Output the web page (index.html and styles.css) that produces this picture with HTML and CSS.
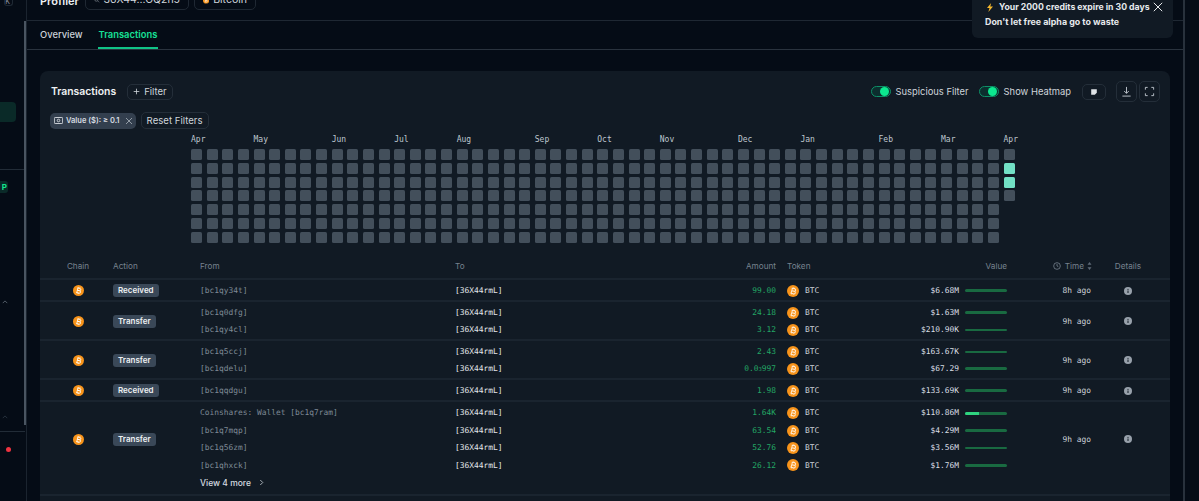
FILE: index.html
```html
<!DOCTYPE html>
<html lang="en">
<head>
<meta charset="utf-8">
<title>Profiler</title>
<link rel="stylesheet" href="styles.css">
</head>
<body>
<svg class="defs" aria-hidden="true">
  <symbol id="btc" viewBox="0 0 24 24">
    <circle cx="12" cy="12" r="12" fill="#f7931a"/>
    <g transform="rotate(14 12 12)" fill="none" stroke="#fff" stroke-width="1.9" stroke-opacity=".85">
      <path d="M8 7h6a2.5 2.5 0 0 1 0 5H9.5h5.2a2.6 2.6 0 0 1 0 5.2H8M9.5 7v10.2M11 5v2M14 5v2M11 17.2v2M14 17.2v2"/>
    </g>
  </symbol>
  <symbol id="info" viewBox="0 0 16 16">
    <circle cx="8" cy="8" r="8" fill="#98a1ab"/>
    <path d="M8 7v5" stroke="#111a24" stroke-width="2"/>
    <circle cx="8" cy="4.6" r="1.2" fill="#111a24"/>
  </symbol>
</svg>

<aside class="side">
  <div class="side-top"><span class="side-key">K</span></div>
  <div class="side-active"></div>
  <div class="side-rule"></div>
  <div class="side-badge">P</div>
  <svg class="side-chev" viewBox="0 0 8 5"><path d="M1 4l3-3 3 3"/></svg>
  <svg class="side-chev side-chev-dim" viewBox="0 0 8 5"><path d="M1 4l3-3 3 3"/></svg>
  <div class="side-rule side-rule-low"></div>
  <div class="side-dot"></div>
  <div class="side-thumb"></div>
</aside>

<main class="main">
  <header class="top">
    <strong class="top-title">Profiler</strong>
    <div class="pill pill-addr">
      <svg class="ico-search" viewBox="0 0 12 12"><circle cx="5" cy="5" r="3.6"/><path d="M8 8l3 3"/></svg>
      <span>36X44...GQ2h5</span>
    </div>
    <div class="pill pill-chain">
      <svg class="ico-btc-md"><use href="#btc"/></svg>
      <span>Bitcoin</span>
    </div>
  </header>

  <nav class="tabs">
    <a class="tab">Overview</a>
    <a class="tab tab-on">Transactions</a>
  </nav>

  <section class="card">
    <div class="toolbar">
      <h2 class="card-title">Transactions</h2>
      <button class="btn-filter"><svg viewBox="0 0 10 10"><path d="M5 1v8M1 5h8"/></svg>Filter</button>
      <div class="tools">
        <span class="toggle"></span><span class="tool-label">Suspicious Filter</span>
        <span class="toggle toggle-2"></span><span class="tool-label">Show Heatmap</span>
        <button class="btn-note"><svg viewBox="0 0 10 10"><path d="M1.500 1.500h7v4.500L6 8.500H1.500z"/></svg></button>
        <button class="btn-icon btn-dl"><svg viewBox="0 0 12 12"><path d="M6 1v7M3.500 5.500L6 8l2.500-2.500M1.500 11h9"/></svg></button>
        <button class="btn-icon"><svg viewBox="0 0 12 12"><path d="M1.500 4V1.500H4M8 1.500h2.500V4M10.500 8v2.500H8M4 10.500H1.500V8"/></svg></button>
      </div>
    </div>

    <div class="filters">
      <span class="chip">
        <svg class="chip-money" viewBox="0 0 12 9"><rect x=".5" y=".5" width="11" height="8" rx="1"/><circle cx="6" cy="4.500" r="1.700"/></svg>
        Value ($): ≥ 0.1
        <svg class="chip-x" viewBox="0 0 8 8"><path d="M1 1l6 6M7 1L1 7"/></svg>
      </span>
      <button class="btn-reset">Reset Filters</button>
    </div>

    <div class="months">
      <span style="grid-column:1/span 4">Apr</span>
      <span style="grid-column:5/span 4">May</span>
      <span style="grid-column:10/span 4">Jun</span>
      <span style="grid-column:14/span 4">Jul</span>
      <span style="grid-column:18/span 4">Aug</span>
      <span style="grid-column:23/span 4">Sep</span>
      <span style="grid-column:27/span 4">Oct</span>
      <span style="grid-column:31/span 4">Nov</span>
      <span style="grid-column:36/span 4">Dec</span>
      <span style="grid-column:40/span 4">Jan</span>
      <span style="grid-column:45/span 4">Feb</span>
      <span style="grid-column:49/span 4">Mar</span>
      <span style="grid-column:53/span 1">Apr</span>
    </div>
    <div class="heat" id="heat"></div>

    <div class="tbl">
      <div class="row head">
        <div class="c-chain">Chain</div>
        <div class="c-action">Action</div>
        <div class="c-from">From</div>
        <div class="c-to">To</div>
        <div class="c-amount">Amount</div>
        <div class="c-token">Token</div>
        <div class="c-value">Value</div>
        <div class="c-time">
          <svg class="ico-clock" viewBox="0 0 12 12"><circle cx="6" cy="6" r="5"/><path d="M6 3v3l2 1"/></svg>Time
          <svg class="ico-sort" viewBox="0 0 6 10"><path d="M3 0l2.500 3.500h-5zM3 10L.5 6.500h5z"/></svg>
        </div>
        <div class="c-details">Details</div>
      </div>

      <div class="row">
        <div class="c-chain"><svg class="ico-chain"><use href="#btc"/></svg></div>
        <div class="c-action"><span class="badge">Received</span></div>
        <div class="c-from"><div class="line">[bc1qy34t]</div></div>
        <div class="c-to"><div class="line">[36X44rmL]</div></div>
        <div class="c-amount"><div class="line">99.00</div></div>
        <div class="c-token"><div class="line"><svg class="ico-token"><use href="#btc"/></svg>BTC</div></div>
        <div class="c-value"><div class="line">$6.68M<span class="bar"></span></div></div>
        <div class="c-time mono">8h ago</div>
        <div class="c-details"><svg class="ico-info"><use href="#info"/></svg></div>
      </div>

      <div class="row">
        <div class="c-chain"><svg class="ico-chain"><use href="#btc"/></svg></div>
        <div class="c-action"><span class="badge">Transfer</span></div>
        <div class="c-from"><div class="line">[bc1q0dfg]</div><div class="line">[bc1qy4cl]</div></div>
        <div class="c-to"><div class="line">[36X44rmL]</div><div class="line">[36X44rmL]</div></div>
        <div class="c-amount"><div class="line">24.18</div><div class="line">3.12</div></div>
        <div class="c-token"><div class="line"><svg class="ico-token"><use href="#btc"/></svg>BTC</div><div class="line"><svg class="ico-token"><use href="#btc"/></svg>BTC</div></div>
        <div class="c-value"><div class="line">$1.63M<span class="bar"></span></div><div class="line">$210.90K<span class="bar bar-thin"></span></div></div>
        <div class="c-time mono">9h ago</div>
        <div class="c-details"><svg class="ico-info"><use href="#info"/></svg></div>
      </div>

      <div class="row">
        <div class="c-chain"><svg class="ico-chain"><use href="#btc"/></svg></div>
        <div class="c-action"><span class="badge">Transfer</span></div>
        <div class="c-from"><div class="line">[bc1q5ccj]</div><div class="line">[bc1qdelu]</div></div>
        <div class="c-to"><div class="line">[36X44rmL]</div><div class="line">[36X44rmL]</div></div>
        <div class="c-amount"><div class="line">2.43</div><div class="line">0.0<sub>3</sub>997</div></div>
        <div class="c-token"><div class="line"><svg class="ico-token"><use href="#btc"/></svg>BTC</div><div class="line"><svg class="ico-token"><use href="#btc"/></svg>BTC</div></div>
        <div class="c-value"><div class="line">$163.67K<span class="bar bar-thin"></span></div><div class="line">$67.29<span class="bar"></span></div></div>
        <div class="c-time mono">9h ago</div>
        <div class="c-details"><svg class="ico-info"><use href="#info"/></svg></div>
      </div>

      <div class="row">
        <div class="c-chain"><svg class="ico-chain"><use href="#btc"/></svg></div>
        <div class="c-action"><span class="badge">Received</span></div>
        <div class="c-from"><div class="line">[bc1qqdgu]</div></div>
        <div class="c-to"><div class="line">[36X44rmL]</div></div>
        <div class="c-amount"><div class="line">1.98</div></div>
        <div class="c-token"><div class="line"><svg class="ico-token"><use href="#btc"/></svg>BTC</div></div>
        <div class="c-value"><div class="line">$133.69K<span class="bar"></span></div></div>
        <div class="c-time mono">9h ago</div>
        <div class="c-details"><svg class="ico-info"><use href="#info"/></svg></div>
      </div>

      <div class="row row-more">
        <div class="c-chain"><svg class="ico-chain"><use href="#btc"/></svg></div>
        <div class="c-action"><span class="badge">Transfer</span></div>
        <div class="c-from"><div class="line">Coinshares: Wallet [bc1q7ram]</div><div class="line">[bc1q7mqp]</div><div class="line">[bc1q56zm]</div><div class="line">[bc1qhxck]</div></div>
        <div class="c-to"><div class="line">[36X44rmL]</div><div class="line">[36X44rmL]</div><div class="line">[36X44rmL]</div><div class="line">[36X44rmL]</div></div>
        <div class="c-amount"><div class="line">1.64K</div><div class="line">63.54</div><div class="line">52.76</div><div class="line">26.12</div></div>
        <div class="c-token"><div class="line"><svg class="ico-token"><use href="#btc"/></svg>BTC</div><div class="line"><svg class="ico-token"><use href="#btc"/></svg>BTC</div><div class="line"><svg class="ico-token"><use href="#btc"/></svg>BTC</div><div class="line"><svg class="ico-token"><use href="#btc"/></svg>BTC</div></div>
        <div class="c-value"><div class="line">$110.86M<span class="bar"><i class="bar-fill" style="width:33%"></i></span></div><div class="line">$4.29M<span class="bar"></span></div><div class="line">$3.56M<span class="bar bar-thin"></span></div><div class="line">$1.76M<span class="bar"></span></div></div>
        <div class="c-time mono">9h ago</div>
        <div class="c-details"><svg class="ico-info"><use href="#info"/></svg></div>
        <a class="view-more">View 4 more<svg viewBox="0 0 6 8"><path d="M1.500 1l3 3-3 3"/></svg></a>
      </div>

      <div class="row">
        <div class="c-chain"></div>
        <div class="c-action"></div>
        <div class="c-from"></div>
        <div class="c-to"></div>
        <div class="c-amount"></div>
        <div class="c-token"><div class="line"><svg class="ico-token"><use href="#btc"/></svg>BTC</div></div>
      </div>
    </div>
  </section>
</main>

<aside class="toast">
  <div class="toast-line">
    <svg class="ico-bolt" viewBox="0 0 10 12"><path d="M6.500 0L1 6.800h3.400L2.800 12 9 4.800H5.400z"/></svg>
    <span>Your 2000 credits expire in 30 days</span>
    <svg class="ico-close" viewBox="0 0 10 10"><path d="M.8.800l8.400 8.400M9.200.800L.8 9.200"/></svg>
  </div>
  <div class="toast-sub">Don't let free alpha go to waste</div>
</aside>

<script src="heatmap.js"></script>
</body>
</html>
```

FILE: styles.css
```css
* { box-sizing: border-box; }
html, body { margin: 0; height: 501px; overflow: hidden; }
body {
  display: flex;
  position: relative;
  background: #050c16;
  color: #d5dae0;
  font-family: Inter, "Liberation Sans", sans-serif;
  font-size: 10px;
}
.defs { position: absolute; width: 0; height: 0; }
button { font: inherit; color: inherit; background: none; cursor: pointer; padding: 0; }

/* sidebar */
.side {
  position: relative;
  flex: 0 0 27px;
  height: 501px;
  border-right: 1px solid #1b242f;
  overflow: hidden;
}
.side-top { height: 6px; display: flex; justify-content: flex-end; padding-right: 13px; }
.side-key {
  height: 6px; width: 9px; padding-right: 2px;
  border: 1px solid #1f2934; border-top: 0; border-radius: 0 0 3px 3px;
  font-size: 7px; line-height: 3px; text-align: right; color: #8a93a0; overflow: hidden;
}
.side-active { width: 16px; height: 20px; margin-top: 96px; background: #0a2a28; border-radius: 0 4px 4px 0; }
.side-rule { height: 1px; width: 25px; margin-top: 47px; background: #222c37; }
.side-badge {
  width: 8px; height: 12px; margin-top: 11px; padding-right: 1px;
  background: #0a2a28; border-radius: 0 3px 3px 0;
  color: #12e58f; font-size: 8px; font-weight: 700; line-height: 12px; text-align: right;
}
.side-chev { display: block; width: 6px; height: 4px; margin: 107px 0 0 2px; fill: none; stroke: #6b7682; stroke-width: 1; }
.side-chev-dim { margin-top: 111px; stroke: #333d49; }
.side-rule-low { margin-top: 12px; }
.side-dot { width: 5px; height: 5px; margin: 15px 0 0 6px; border-radius: 50%; background: #ef3340; }
.side-thumb { position: absolute; left: 24px; top: 21px; width: 2px; height: 404px; background: #4a5561; }

/* main */
.main {
  flex: 0 0 1158px;
  height: 501px;
  border-right: 2px solid #28313c;
  overflow: hidden;
}
.top {
  height: 21px;
  padding: 0 0 10px 13px;
  display: flex;
  align-items: flex-end;
  gap: 5px;
  border-bottom: 1px solid #1f2833;
}
.top-title { flex: none; width: 40px; font-size: 11px; font-weight: 600; color: #eef1f3; line-height: 18px; }
.pill {
  flex: none;
  height: 28px;
  display: flex;
  align-items: flex-end;
  gap: 4px;
  padding: 0 8px 2px;
  border: 1px solid #1f2833;
  border-radius: 5px;
  font-size: 10.500px;
  line-height: 14px;
  color: #cfd5db;
}
.pill-addr { width: 104px; }
.pill-chain { width: 62px; }
.ico-search { width: 10px; height: 10px; margin-bottom: 2px; fill: none; stroke: #aeb6bf; stroke-width: 1; }
.ico-btc-md { width: 11px; height: 11px; margin-bottom: 1px; }

.tabs {
  height: 29px;
  padding-left: 13px;
  display: flex;
  gap: 15px;
  border-bottom: 1px solid #2a333e;
  font-size: 9.400px;
  font-weight: 500;
}
.tab { padding: 7px 0 0; height: 28px; color: #cdd3d9; line-height: 14px; }
.tab-on { color: #17e096; font-weight: 600; border-bottom: 2px solid #10c487; padding-inline: 1px; }

.card {
  margin: 21px 13px 0 13px;
  padding: 10px 0 0;
  height: 500px;
  background: #111a24;
  border-radius: 8px 8px 0 0;
}
.toolbar { height: 21px; padding: 0 10px 0 11px; display: flex; align-items: center; }
.card-title { margin: 0; font-size: 10.400px; font-weight: 600; color: #eef1f3; }
.btn-filter {
  height: 16px; margin-left: 11px; padding: 0 5px;
  display: flex; align-items: center; gap: 4px;
  border: 1px solid #242e39; border-radius: 5px;
  font-size: 9.500px; color: #cfd5db;
}
.btn-filter svg { width: 7px; height: 7px; fill: none; stroke: #d5dae0; stroke-width: 1.100; }
.tools { margin-left: auto; display: flex; align-items: center; }
.toggle {
  position: relative;
  width: 20px; height: 11px; margin-right: 5px;
  border: 1px solid #0d9067; border-radius: 6px; background: #0c2e2e;
}
.toggle::after {
  content: ""; position: absolute; right: 1px; top: 0;
  width: 9px; height: 9px; border-radius: 50%; background: #0ce88f;
}
.toggle-2 { margin-left: 10px; }
.tool-label { font-size: 9.400px; color: #cfd5db; white-space: nowrap; }
.btn-note {
  width: 24px; height: 16px; margin-left: 11px;
  display: flex; align-items: center; justify-content: center;
  border: 1px solid #242e39; border-radius: 5px;
}
.btn-note svg { width: 8px; height: 8px; fill: #dfe3e7; }
.btn-icon {
  width: 21px; height: 21px; margin-left: 2px;
  display: flex; align-items: center; justify-content: center;
  border: 1px solid #242e39; border-radius: 5px;
}
.btn-icon svg { width: 11px; height: 11px; fill: none; stroke: #c4cbd2; stroke-width: 1; }
.btn-dl { margin-left: 10px; }

.filters { height: 17px; margin-top: 10px; padding-left: 10px; display: flex; align-items: center; gap: 5px; }
.chip {
  height: 16px; padding: 0 3px 0 4px;
  display: flex; align-items: center; gap: 3px;
  background: #333f4e; border-radius: 5px;
  font-size: 7.500px; font-weight: 600; color: #d8dde2; white-space: nowrap;
}
.chip-money { width: 9px; height: 7px; fill: none; stroke: #d8dde2; stroke-width: 1.200; }
.chip-x { width: 8px; height: 8px; margin-left: 2px; fill: none; stroke: #aab2bb; stroke-width: .8; }
.btn-reset {
  height: 17px; width: 68px;
  border: 1px solid #242e39; border-radius: 5px;
  font-size: 9.600px; color: #cfd5db; white-space: nowrap;
}

.months, .heat {
  margin-left: 151px;
  display: grid;
  grid-template-columns: repeat(53, 11px);
  column-gap: 4.630px;
}
.months {
  height: 12px; margin-top: 5px;
  font-family: "DejaVu Sans Mono", monospace; font-size: 8px; line-height: 12px; color: #bfc7cf;
}
.heat {
  margin-top: 3px;
  grid-template-rows: repeat(7, 11px);
  row-gap: 2.830px;
  grid-auto-flow: column;
}
.cell { background: #434f5b; border-radius: 1.500px; }
.cell-hot { background: #72e0c5; }

/* table */
.tbl { margin-top: 12px; font-family: "DejaVu Sans Mono", monospace; font-size: 7.900px; }
.row {
  display: grid;
  grid-template-columns: 73px 87px 255px 200px 121px 111px 120px 84px 74px;
  align-items: center;
  padding: 2.500px 0 .5px;
  border-bottom: 2px solid #1a242f;
}
.row.head {
  height: 25px;
  padding: 0;
  font-family: Inter, "Liberation Sans", sans-serif;
  font-size: 8.200px;
  color: #77828f;
}
.line { height: 17px; line-height: 17px; display: flex; align-items: center; white-space: nowrap; }
.c-chain { text-align: center; padding-left: 3px; line-height: 0; }
.head .c-chain { line-height: normal; }
.c-from { color: #7f8a96; }
.c-to { color: #e3e7ea; }
.c-amount { color: #23a765; text-align: right; }
.c-amount .line { justify-content: flex-end; }
.head .c-amount { color: inherit; }
.c-amount sub { font-size: 5.500px; line-height: 0; vertical-align: -1px; }
.c-token { padding-left: 11px; color: #cfd5db; }
.head .c-token { color: inherit; }
.c-value { color: #d9dee3; text-align: right; }
.c-value .line { justify-content: flex-end; gap: 6px; }
.head .c-value { color: inherit; }
.c-time { text-align: right; display: flex; justify-content: flex-end; align-items: center; }
.c-time.mono { color: #cdd3d9; }
.c-details { text-align: center; line-height: 0; }
.head .c-details { line-height: normal; }
.head .c-from, .head .c-to { color: inherit; }
.badge {
  display: inline-block; height: 13px; padding: 0 5px;
  background: #3a4858; border-radius: 3px;
  font-family: Inter, "Liberation Sans", sans-serif;
  font-size: 8px; font-weight: 600; line-height: 13px; color: #eef1f3;
}
.ico-chain { width: 11px; height: 11px; }
.ico-token { flex: none; width: 12px; height: 12px; margin-right: 6px; }
.ico-info { width: 8px; height: 8px; }
.ico-clock { width: 8px; height: 8px; margin-right: 4px; fill: none; stroke: #8a95a1; stroke-width: 1; }
.ico-sort { width: 5px; height: 8px; margin-left: 3px; margin-right: -1px; fill: #5e6976; }
.bar {
  display: block; flex: none; width: 42px; height: 3px;
  background: #196a41; border-radius: 2px; overflow: hidden;
}
.bar-thin { height: 2px; }
.bar-fill { display: block; height: 100%; background: #2fd480; }
.row-more { padding-bottom: 3px; }
.row-more .line { height: 17.400px; line-height: 17.400px; }
.view-more {
  grid-column: 3; grid-row: 2;
  height: 17px; display: flex; align-items: center; gap: 8px;
  font-family: Inter, "Liberation Sans", sans-serif;
  font-size: 8.500px; font-weight: 500; color: #d5dae0;
}
.view-more svg { width: 5px; height: 7px; fill: none; stroke: #c4cbd2; stroke-width: 1; }

/* toast */
.toast {
  position: absolute; left: 972px; top: -6px;
  width: 201px; height: 44px; padding: 6px 0 0 13px;
  background: #111a24; border-radius: 6px;
  font-size: 8.900px; font-weight: 700; color: #e6e9ec;
  font-family: Inter, "Liberation Sans", sans-serif;
}
.toast-line { display: flex; align-items: center; height: 14px; font-size: 8.700px; white-space: nowrap; }
.ico-bolt { flex: none; width: 8px; height: 9px; margin-left: 1px; margin-right: 5px; fill: #f5b82e; }
.ico-close { position: absolute; left: 181px; top: 8px; width: 10px; height: 10px; fill: none; stroke: #e6e9ec; stroke-width: 1; }
.toast-sub { margin-top: 1px; line-height: 14px; white-space: nowrap; }
```

FILE: heatmap.js
```js
var heat = document.getElementById('heat');
var hot = { '52:1': 1, '52:2': 1 };
for (var col = 0; col < 53; col++) {
  var rows = col === 52 ? 4 : 7;
  for (var row = 0; row < rows; row++) {
    var cell = document.createElement('div');
    cell.className = hot[col + ':' + row] ? 'cell cell-hot' : 'cell';
    cell.style.gridColumn = col + 1;
    cell.style.gridRow = row + 1;
    heat.appendChild(cell);
  }
}
```
